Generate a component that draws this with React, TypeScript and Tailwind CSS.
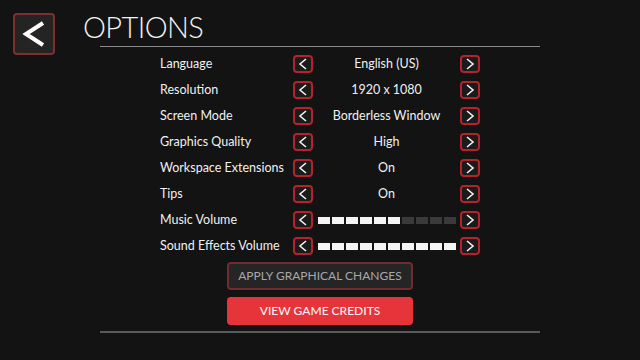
import React from "react";

const font = { fontFamily: "Lato, 'Open Sans', sans-serif" };

function Arrow({ dir }: { dir: "l" | "r" }) {
  return (
    <div className="w-[20px] h-[18px] rounded-[4px] border-2 border-[#b3242a] bg-[#1b1b1b] flex items-center justify-center shrink-0">
      <svg width="10" height="12" viewBox="0 0 10 12">
        {dir === "l" ? (
          <path d="M8 1 L2 6 L8 11" fill="none" stroke="#f2f2f2" strokeWidth="1.6" />
        ) : (
          <path d="M2 1 L8 6 L2 11" fill="none" stroke="#f2f2f2" strokeWidth="1.6" />
        )}
      </svg>
    </div>
  );
}

function Bars({ filled }: { filled: number }) {
  return (
    <div className="flex gap-[2px] items-center">
      {Array.from({ length: 10 }).map((_, i) => (
        <div
          key={i}
          className={i < filled ? "w-[12px] h-[7px] bg-[#f4f4f4]" : "w-[12px] h-[7px] bg-[#3a3a3a]"}
        />
      ))}
    </div>
  );
}

const rows: { label: string; value?: string; bars?: number }[] = [
  { label: "Language", value: "English (US)" },
  { label: "Resolution", value: "1920 x 1080" },
  { label: "Screen Mode", value: "Borderless Window" },
  { label: "Graphics Quality", value: "High" },
  { label: "Workspace Extensions", value: "On" },
  { label: "Tips", value: "On" },
  { label: "Music Volume", bars: 6 },
  { label: "Sound Effects Volume", bars: 10 },
];

export default function App() {
  return (
    <div className="w-[640px] h-[360px] bg-[#131313] flex flex-col overflow-hidden" style={font}>
      <div className="flex items-start h-[46px] pt-[13px] pl-[13px]">
        <div className="w-[42px] h-[42px] rounded-[4px] border-2 border-[#7e2f33] bg-[#242424] flex items-center justify-center shrink-0">
          <svg width="24" height="26" viewBox="0 0 24 26">
            <path d="M21 2 L4 13 L21 24" fill="none" stroke="#ffffff" strokeWidth="4" strokeLinejoin="miter" />
          </svg>
        </div>
        <div className="ml-[28px] -mt-[4px] text-[29px] leading-[36px] font-light text-[#f2f2f2] tracking-[-0.6px]">OPTIONS</div>
      </div>
      <div className="mx-[100px] h-px bg-[#8a8a8a]" />
      <div className="mx-[100px] pt-[4px] flex flex-col">
        {rows.map((r) => (
          <div key={r.label} className="h-[26px] flex items-center pl-[60px]">
            <div className="w-[133px] text-[12.5px] text-[#f0f0f0]">{r.label}</div>
            <Arrow dir="l" />
            <div className="w-[147px] flex items-center justify-center text-[12.5px] text-[#f0f0f0]">
              {r.bars !== undefined ? <div className="pl-[1px] pr-[1px]"><Bars filled={r.bars} /></div> : r.value}
            </div>
            <Arrow dir="r" />
          </div>
        ))}
        <div className="mt-[3px] flex flex-col items-center gap-[7px]">
          <div className="w-[186px] h-[28px] rounded-[4px] border-2 border-[#6e2c2f] bg-[#252525] flex items-center justify-center text-[12px] text-[#a8a8a8]">
            APPLY GRAPHICAL CHANGES
          </div>
          <div className="w-[186px] h-[28px] rounded-[4px] bg-[#e5343a] flex items-center justify-center text-[12px] font-medium text-[#f6f0f0]">
            VIEW GAME CREDITS
          </div>
        </div>
        <div className="mt-[6px] h-[2px] bg-[#5a5a5a]" />
      </div>
    </div>
  );
}
